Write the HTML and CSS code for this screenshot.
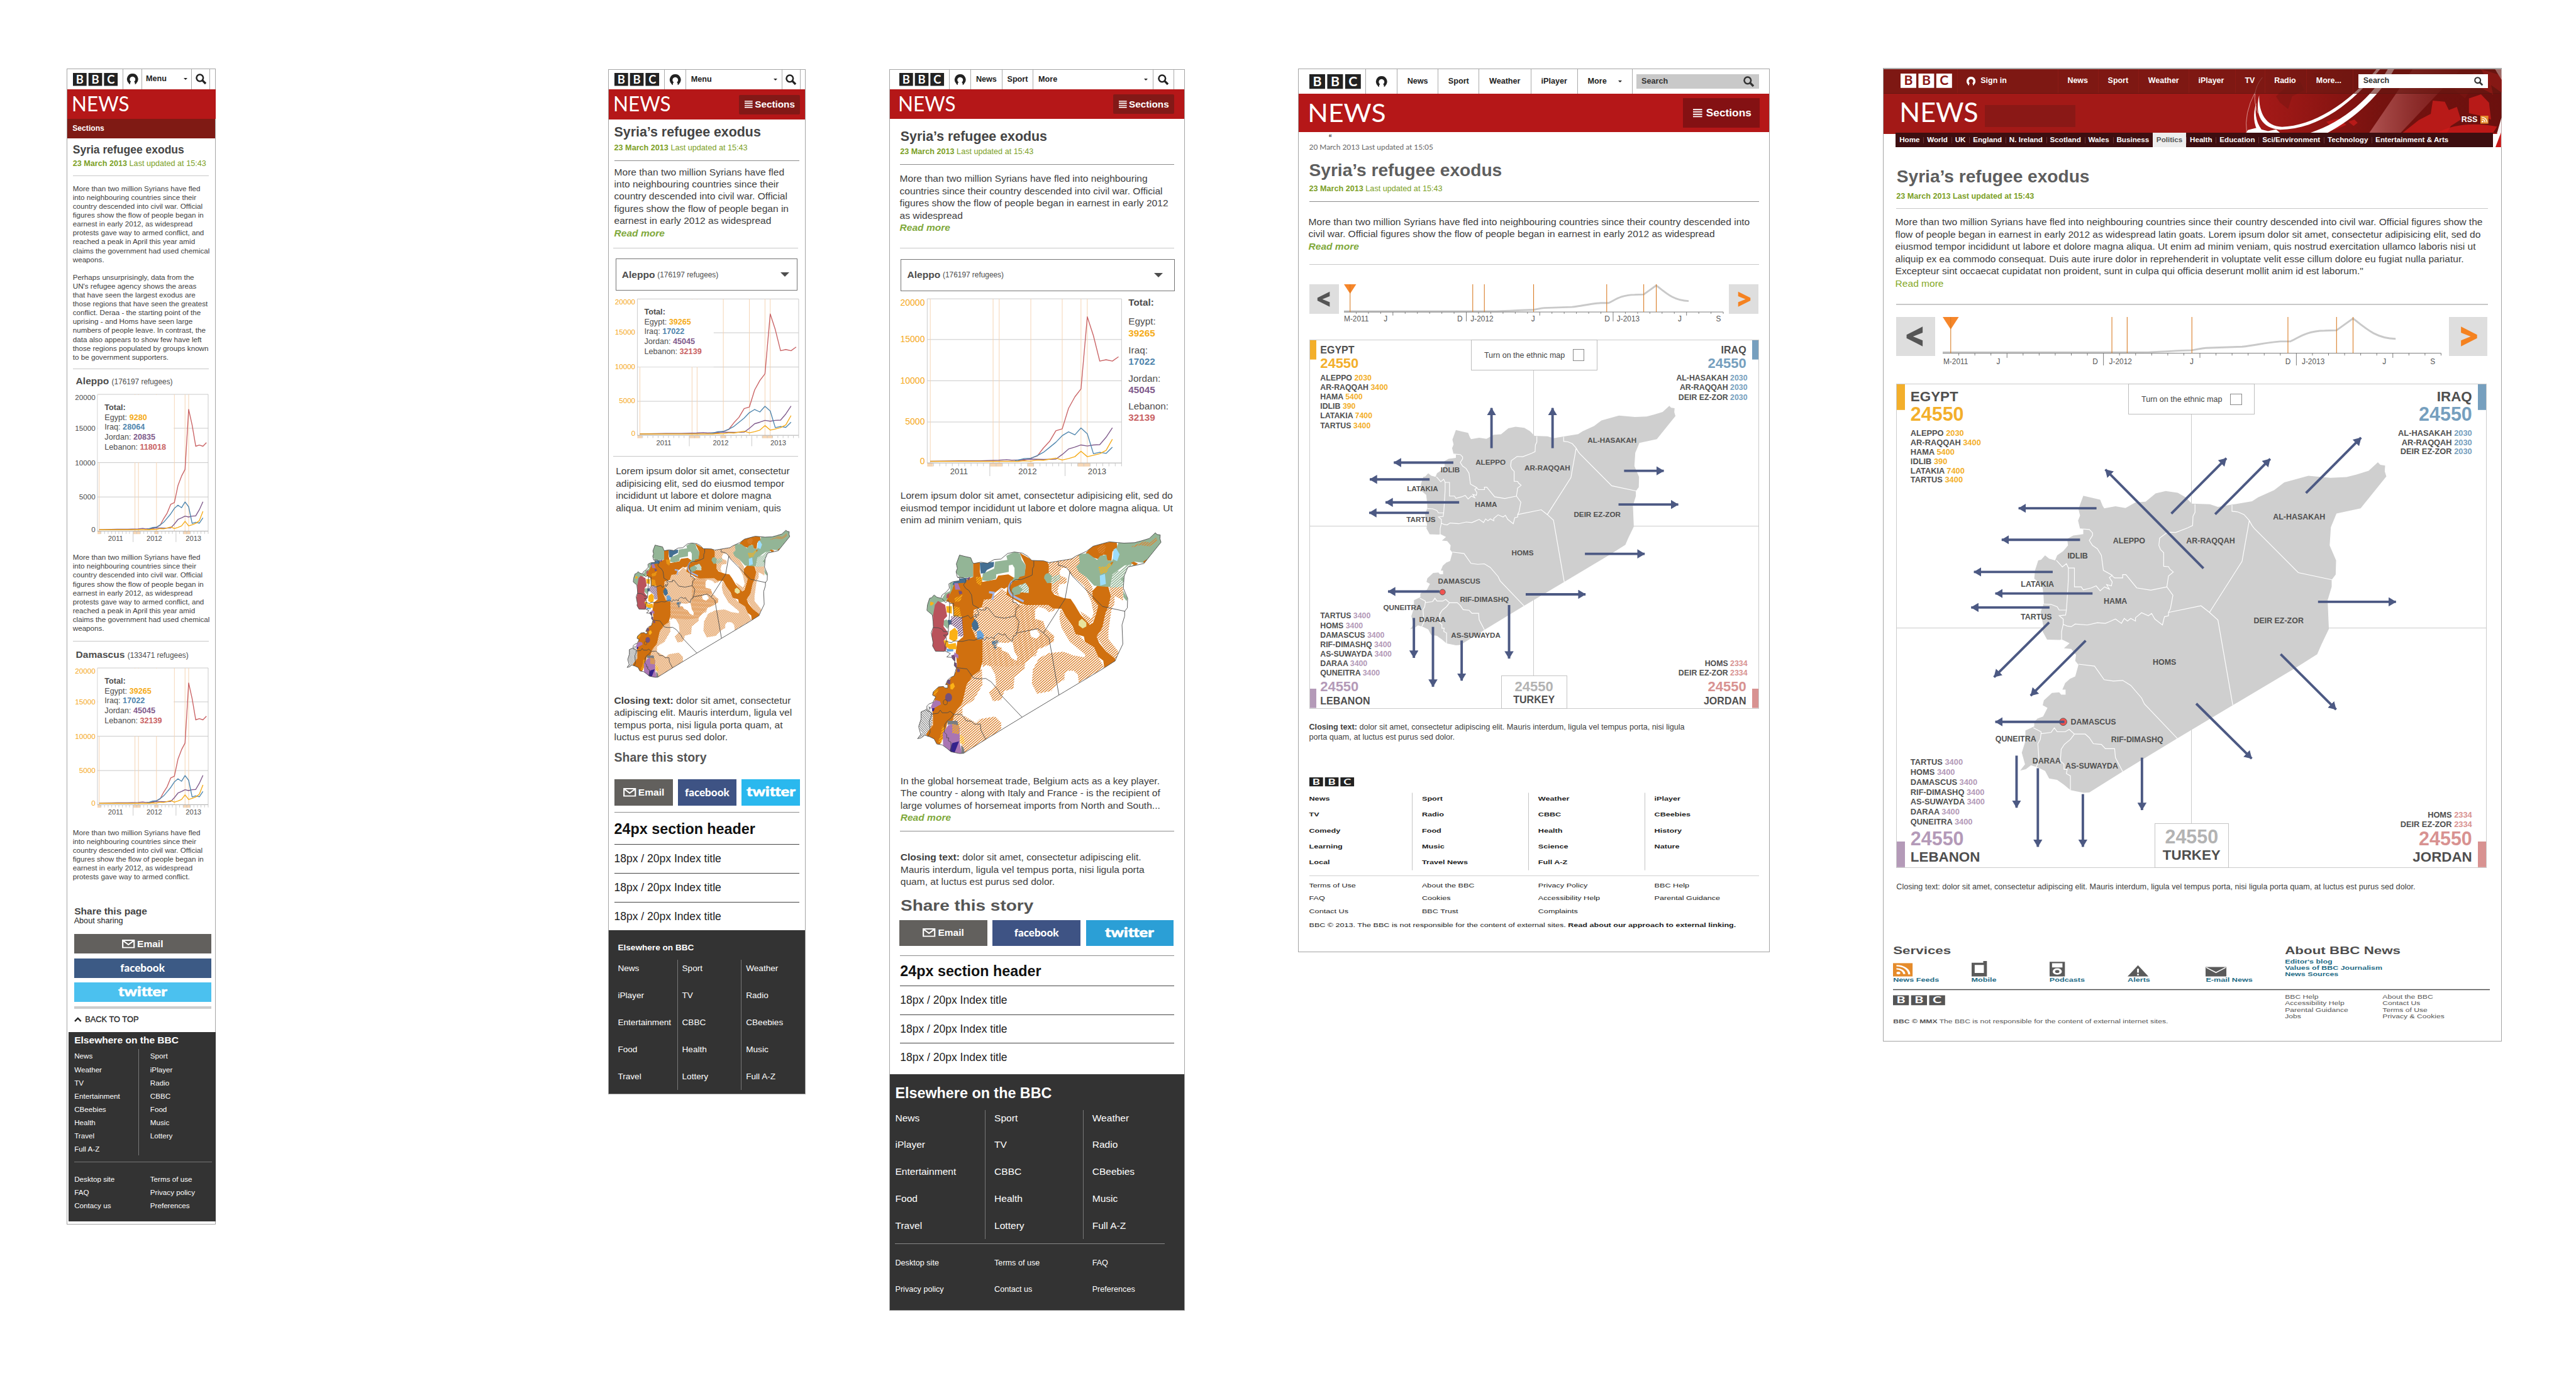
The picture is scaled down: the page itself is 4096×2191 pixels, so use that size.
FILE: index.html
```html
<!DOCTYPE html>
<html lang="en">
<head>
<meta charset="utf-8">
<title>Syria's refugee exodus - breakpoints</title>
<link rel="stylesheet" href="styles.css">
</head>
<body>
<svg class="defs" width="0" height="0">
  <defs>
    <symbol id="bbc" viewBox="0 0 73 21" preserveAspectRatio="none">
      <path class="bg" d="M0 0h22.3v21H0zM25.4 0h22.3v21H25.4zM50.8 0h22.3v21H50.8z"/>
      <g class="fg bbc-t"><text x="11.2" y="17">B</text><text x="36.6" y="17">B</text><text x="62" y="17">C</text></g>
    </symbol>
    <symbol id="news" viewBox="0 0 92 24" preserveAspectRatio="none">
      <text class="news-t" x="-2" y="23.6" textLength="94" lengthAdjust="spacingAndGlyphs">NEWS</text>
    </symbol>
    <symbol id="user" viewBox="0 0 18 18">
      <path fill="currentColor" fill-rule="evenodd" d="M9 0a9 9 0 0 1 6.6 15.200q-.4 1.800-2.600 2.600q.6-3-1.400-4.600a4.600 4.600 0 1 0-5.200 0q-2 1.600-1.400 4.600q-2.200-.8-2.600-2.600A9 9 0 0 1 9 0z"/>
    </symbol>
    <symbol id="search" viewBox="0 0 18 18">
      <circle cx="7" cy="7" r="5.500" fill="none" stroke="currentColor" stroke-width="2.600"/>
      <path d="M11 11l5.500 5.500" stroke="currentColor" stroke-width="3.400"/>
    </symbol>
    <symbol id="bars" viewBox="0 0 13 12">
      <path d="M0 1h13M0 4.300h13M0 7.700h13M0 11h13" stroke="currentColor" stroke-width="1.700"/>
    </symbol>
    <symbol id="mail" viewBox="0 0 21 16" preserveAspectRatio="none">
      <path d="M1.200 1.200h18.600v13.600H1.200zM1.200 1.500l9.300 7.800 9.300-7.800" fill="none" stroke="currentColor" stroke-width="2.200"/>
    </symbol>
    <symbol id="rss" viewBox="0 0 20 20" preserveAspectRatio="none">
      <path fill="#e58b2b" d="M0 0h20v20H0z"/><circle cx="5.500" cy="14.800" r="2" fill="#fff"/>
      <path d="M3.500 8.500a8 8 0 0 1 8 8M3.500 3.800a13 13 0 0 1 13 13" fill="none" stroke="#fff" stroke-width="2.200"/>
    </symbol>
    <symbol id="chev-l" viewBox="0 0 48 48"><path fill="#555" d="M33 12v7.500l-12 4.800 12 4.800v7.500L13 26.500v-4.400z"/></symbol>
    <symbol id="chev-r" viewBox="0 0 48 48"><path fill="#f58220" d="M15 12v7.500l12 4.800-12 4.800v7.500l20-10.100v-4.400z"/></symbol>

    <symbol id="axis" viewBox="210 870 953 601" preserveAspectRatio="none">
      <path class="grid" d="M210 870H1163V1471M210 870V1471M210 1019H1163M210 1170H1163M210 1321H1163"/>
    </symbol>
    <symbol id="events" viewBox="210 870 953 601" preserveAspectRatio="none">
      <path class="ev" d="M225 870V1471M533 870V1471M563 870V1471M718 870V1471M872 870V1471M964 870V1471M995 870V1471"/>
      <path fill="#f6d6b4" d="M210 1471h28v13h-28zM516 1471h62v13h-62zM703 1471h30v13h-30zM948 1471h60v13h-60z"/>
      <path class="grid dark" d="M210 1471H1163"/>
      <path class="grid" d="M241 1471v12M271 1471v12M302 1471v12M333 1471v12M364 1471v12M394 1471v12M425 1471v12M456 1471v12M486 1471v12M517 1471v48M548 1471v12M579 1471v12M609 1471v12M640 1471v12M671 1471v12M702 1471v12M732 1471v12M763 1471v12M794 1471v12M825 1471v12M855 1471v12M886 1471v48M917 1471v12M948 1471v12M978 1471v12M1009 1471v12M1040 1471v12M1071 1471v12M1101 1471v12M1132 1471v12M1163 1471v12"/>
    </symbol>
    <symbol id="series" viewBox="210 870 953 601" preserveAspectRatio="none">
      <polyline class="ln" stroke="#c96264" points="655,1463 685,1460 718,1454 750,1445 780,1416 810,1392 841,1353 872,1346 903,1271 934,1229 964,1200 995,936 1025,1005 1056,1098 1087,1093 1118,1098 1148,1082"/>
      <polyline class="ln" stroke="#7f5a8b" points="225,1465 380,1463 470,1463 560,1461 600,1459 625,1461 655,1460 718,1457 780,1458 841,1457 872,1440 903,1420 934,1413 964,1405 995,1409 1025,1405 1056,1404 1087,1377 1118,1342"/>
      <polyline class="ln" stroke="#4f86ae" points="640,1462 655,1461 685,1455 718,1454 750,1444 780,1432 810,1414 841,1395 872,1371 903,1357 934,1368 964,1343 995,1364 1025,1437 1056,1432 1087,1436 1118,1413"/>
      <polyline class="ln" stroke="#f5ab18" points="225,1465 655,1465 685,1463 718,1464 750,1460 780,1461 841,1453 872,1460 903,1455 934,1448 964,1428 995,1448 1025,1443 1056,1437 1087,1425 1118,1384"/>
    </symbol>

    <symbol id="flow" viewBox="0 0 1240 183" preserveAspectRatio="none">
      <path class="curve" d="M0 168L500 168C540 166 580 160 620 158C635 154 640 149 655 147L745 141C780 134 800 122 840 116L865 116C885 99 905 66 950 65L980 63L1021 7C1055 59 1080 102 1127 104"/>
      <path class="tick" d="M0 172H1240M40 172v11M80 172v11M120 172v11M160 172v22M200 172v11M240 172v11M280 172v11M320 172v11M360 172v11M400 172v58M440 172v11M480 172v11M520 172v11M560 172v11M600 172v11M640 172v22M680 172v11M720 172v11M760 172v11M800 172v11M840 172v11M880 172v58M920 172v11M960 172v11M1000 172v11M1040 172v11M1080 172v11M1120 172v22M1160 172v11M1200 172v11M1240 172v11"/>
      <path fill="#f6862a" d="M0 0h40L20 59z"/>
      <path class="mark" d="M20 0V172M421 0V172M459 0V172M620 0V172M859 0V172M980 0V172M1021 0V172"/>
    </symbol>

    <marker id="tip" markerUnits="userSpaceOnUse" markerWidth="13" markerHeight="15" refX="12" refY="7.500" orient="auto"><path fill="#4c5983" d="M0 0L12.500 7.500L0 15z"/></marker>

    <path id="land" d="M1243 249L1249 257 1261 259 1260 276 1264 292 1200 388 1140 404 1126 445 1123 500 1139 545 1138 588 1128 604 1128 625 1118 665 1121 752 1102 800 1092 828 1040 868 882 982 744 1082 608 1182 525 1245 510 1246 478 1238 462 1222 445 1207 425 1203 415 1180 398 1170 380 1163 367 1175 353 1179 365 1160 357 1125 366 1090 366 1058 388 1046 388 1032 396 1022 410 1016 421 990 409 982 412 967 432 945 450 943 455 950 466 950 466 935 458 935 465 915 477 902 490 895 498 860 490 848 492 830 480 812 462 810 476 795 456 783 452 785 420 784 409 760 411 745 404 700 412 675 411 650 408 620 388 600 390 575 398 545 405 543 415 530 425 540 440 545 445 530 460 517 472 500 470 480 485 470 510 466 510 452 502 450 497 425 502 410 498 390 510 350 530 356 552 362 558 380 562 388 590 382 615 387 640 370 665 368 690 343 715 336 745 341 765 355 780 374 825 376 845 384 880 377 930 367 945 355 985 333 1010 310 1070 290 1125 296 1165 294 1190 286 1220 275Z"/>
    <path id="borders" d="M788 376L788 400 783 412 782 440 770 447 740 461 720 460 700 478 698 500 702 512 710 522 710 563 722 564 726 572 734 580 722 592 718 625M502 450L525 452 533 462 533 470 525 485 533 500 545 510 555 530 560 575 582 590 575 597 582 610 580 622 568 618 575 632 563 625 552 637 542 622 530 628 510 634 505 625 488 625 488 568 473 568 468 555 458 565 443 545M582 592L588 598 608 598 608 588 616 588 643 628 678 635 718 625 733 650 727 690 722 702 722 712 712 715 707 740 688 722 680 705 672 712 655 703 640 718 640 728 628 720 620 728 612 720 605 735 590 722 575 730 565 735 545 733 520 740 490 737 480 745 470 743 460 738 456 760 456 783M473 568L473 600 470 660 468 695 450 695 445 685 430 678 412 677M468 695L466 710 450 712 460 722 460 738M722 702L803 682 824 702 845 725 882 982M824 702L905 548 923 425M880 378L880 397 895 399 910 407 923 425 930 440 935 448 1045 582 1130 604M498 858L538 864 562 905 585 909 608 907 628 922 655 960 662 978 744 1082M386 1050L405 1062 405 1068 430 1064 438 1050 445 1062 465 1062 475 1055 488 1069 515 1069 525 1080 535 1098 555 1100 565 1113 588 1113 590 1140 608 1182M405 1066L403 1085 397 1098 400 1150 392 1170M488 1069L478 1085 463 1100 455 1115 453 1150 462 1160 462 1175 470 1175 468 1188 478 1195 478 1238"/>
    <symbol id="syria" viewBox="0 0 965 791" overflow="visible">
      <g transform="translate(-30.220 -7.590) scale(.65703 .54201)">
        <use href="#land" fill="#cfcfcf"/><use href="#borders" class="edge"/>
      </g>
    </symbol>

    <pattern id="hOr" width="8" height="8" patternUnits="userSpaceOnUse" patternTransform="rotate(-35)"><rect width="8" height="4" fill="#dc8635"/></pattern>
    <pattern id="hGr" width="8" height="8" patternUnits="userSpaceOnUse" patternTransform="rotate(-35)"><rect width="8" height="4.400" fill="#93b596"/></pattern>
    <pattern id="hYe" width="8" height="8" patternUnits="userSpaceOnUse" patternTransform="rotate(-35)"><rect width="8" height="4.400" fill="#fbb116"/></pattern>
    <pattern id="hPu" width="8" height="8" patternUnits="userSpaceOnUse" patternTransform="rotate(-35)"><rect width="8" height="4.400" fill="#74507a"/></pattern>
    <pattern id="hBk" width="7" height="7" patternUnits="userSpaceOnUse" patternTransform="rotate(40)"><rect width="7" height="2.600" fill="#666"/></pattern>
    <clipPath id="inside"><use href="#land" transform="matrix(1.3095 0 0 .8726 -297.300 -46.300)"/></clipPath>
    <symbol id="ethnic" viewBox="165 171 1193 870" preserveAspectRatio="none">
      <g clip-path="url(#inside)">
        <g fill="url(#hOr)">
          <path d="M480 470L490 435 530 430 575 390 600 405 625 425 640 445 665 460 700 450 810 452 840 475 810 485 790 470 755 463 740 480 740 510 780 520 790 545 760 550 750 555 760 575 740 588 720 580 712 560 790 570 835 575 832 600 790 620 755 630 745 655 715 665 690 690 690 708 640 740 635 785 590 795 575 830 535 835 515 800 550 770 545 730 525 700 500 692 485 705 478 600 450 585 430 545 435 500 440 475Z"/>
          <path d="M640 450L740 460 740 510 780 520 790 545 830 575 832 600 755 630 690 690 600 700 480 690 478 600 640 600Z"/>
          <path d="M865 470L890 500 925 545 985 600 1030 620 1050 660 1080 702 955 762 950 730 930 715 900 715 885 730 885 750 850 765 820 795 750 805 725 765 730 710 760 665 810 645 880 640 930 655 985 662 985 650 910 600 870 545 860 510Z"/>
          <path d="M805 285L965 255 960 290 945 300 960 325 990 345 1022 385 1025 430 1050 455 1040 490 1010 545 960 480 990 495 1015 510 1028 490 1015 440 980 380 910 330 900 310 870 310 860 330 865 340 895 350 895 370 860 375 850 400 860 420 825 405 822 370 808 335Z"/>
          <path d="M1105 385L1172 385 1172 440 1155 430 1130 420 1130 450 1115 475 1105 530 1100 560 1100 590 1150 640 1135 680 1090 640 1040 580 1085 490 1112 420Z"/>
          <path d="M430 738L480 705 483 770 440 830 385 860 385 890 345 895 345 880 385 840 405 770Z"/>
          <path d="M330 905L345 890 395 893 450 920 470 905 545 895 575 920 575 955 397 1042 380 1005 370 930Z"/>
          <path d="M205 965L240 900 235 955Z"/>
        </g>
        <path fill="#fff" d="M555 602L600 605 630 600 640 640 655 660 650 675 625 665 610 645 580 635 575 622 555 620ZM715 560L745 550 765 572 745 588 720 580ZM485 700l18-8 22 8 5 35-20 10-28-5z"/>
        <path fill="#d0700f" d="M437 288L470 286 470 325 482 365 550 355 560 340 610 335 640 350 690 330 695 300 665 250 722 276 800 283 808 300 808 335 790 345 800 365 822 370 822 400 835 415 880 428 915 432 935 455 952 478 962 492 1010 535 1025 525 1040 490 1050 458 1022 430 1022 400 1050 376 1100 385 1112 420 1100 460 1085 490 1070 545 1042 580 1055 605 1090 640 1130 665 1140 680 1080 705 1075 675 1050 660 1030 622 985 600 980 580 940 570 925 540 890 500 870 470 830 470 805 455 700 456 670 450 600 415 605 385 590 392 575 388 540 410 525 432 490 435 480 465 440 475 437 500 450 520 430 545 450 585 483 590 483 680 470 715 435 735 405 770 385 840 348 880 335 915 310 920 300 960 275 1005 240 1000 205 965 240 930 240 895 235 850 250 830 235 800 258 775 300 770 352 720 358 690 352 640 360 600 390 580 380 500 345 500 335 450 305 440 330 400 345 370 395 360 437 345Z"/>
        <path fill="#d0700f" d="M990 250L1030 215 1140 205 1145 235 1120 245 1115 282 1095 280 1085 258 1075 258 1050 275 1000 262Z"/>
        <g fill="#93b596">
          <path d="M360 255L400 262 437 268 437 345 400 348 375 350 345 320 350 285Z"/>
          <path d="M480 358L485 332 540 312 545 285 605 278 600 262 645 244 668 255 675 278 695 300 690 340 665 345 655 358 625 362 640 345 640 310 630 297 612 300 612 325 580 330 550 335 550 352 510 362Z"/>
          <path d="M955 255L1000 252 1022 265 1045 278 1060 262 1090 258 1095 280 1118 282 1150 208 1370 160 1370 213 1275 290 1225 285 1210 297 1180 300 1120 335 1110 385 1070 383 1030 380 990 345 955 325 942 305 960 290Z"/>
          <path d="M785 350q0-18 20-20l18 10-3 28-20 2z"/>
          <path d="M630 390q20-10 40-10l10 15-15 18-30 5-10-15z"/>
          <path d="M215 435L240 415 285 430 300 410 325 400 322 365 345 368 335 395 305 440 260 450 245 500 210 500Z"/>
          <path d="M262 463l15-8 10 12-8 15-15-2zM292 518l15-6 15 18-10 20-20-15zM1172 400l22 30-5 10-15-15zM1160 355l15-10v20z"/>
        </g>
        <path fill="url(#hGr)" d="M1120 325L1160 320 1190 295 1240 298 1185 330 1170 385 1112 388ZM820 345l40-10 5 20-40 18z"/>
        <path fill="#fff" d="M660 380l35-10 15 18 0 20-40-2 10-12z"/>
        <path fill="url(#hGr)" d="M650 380l45-12 15 20 0 20-40-2z"/>
        <path fill="url(#hOr)" d="M1215 225l60-20 30 5 30-20 5 15-40 20-45-5-40 10zM1045 235l25-20 18 10-10 30-25-5z"/>
        <path fill="#d0700f" d="M1210 290l15-5 20 8-15 8zM1110 290l15-5-10 15zM1270 285l20-10-10 20z"/>
        <path fill="url(#hYe)" d="M1050 305l40 0 10-12 20-2-15 15-15 22-30 5z"/>
        <path fill="#9cdcfb" d="M1125 238l12-7 18 25-12 27-22-8zM1058 340l25-7 5 40-28 7z"/>
        <path fill="#446f93" d="M470 290L540 286 538 305 505 318 495 330 475 332 472 315ZM430 530l15-20 15 15 5 20-15 15-15-10zM370 352l38-4-6 20-35 2-30 8 2-12zM312 515l20 0 0 15-15 5z"/>
        <path fill="#67a3dc" d="M455 560l18-5 17 18-3 17-30 2zM305 628l35 0 0 10-30 2z"/>
        <path fill="none" stroke="#446f93" stroke-width="14" stroke-dasharray="4 3" d="M538 600q10 20 5 28M530 605l30-5"/>
        <path fill="#b9535c" d="M250 455L265 440 300 455 310 500 295 512 292 540 310 560 315 570 295 595 310 620 300 642 248 645 228 590 240 550 240 500ZM308 415l15-8-5 20-12 3z"/>
        <g fill="#fbb116"><path d="M305 460l28 0 0 30-25-5zM228 442l18 5-10 10-10 0zM322 560l25-15 15 15-2 30-15 10-25-10zM292 595l20 0 5 15 35-5 5 25-35 0-20-12zM325 770l15-8 8 15-12 12-10-2z"/></g>
        <path fill="url(#hYe)" d="M345 430l40-15-10 25-25 5zM450 345l35 0-10 35-20-10zM340 460l30 5 10 40-40 0zM245 790l25-5-15 25-12 5zM285 935l20 5 0 25-25 35-15-5 15-30z"/>
        <path fill="url(#hPu)" d="M330 500l55 5 5 75-25 0-5-30-35-20z"/><circle cx="317" cy="820" r="17" fill="#74507a"/><circle cx="301" cy="839" r="10" fill="none" stroke="#444" stroke-width="2"/>
        <path fill="#74507a" d="M330 655l20-5 0 28-15-8zM345 680l12 5 0 18-12-5zM358 705l15 5-2 10-12 0zM312 750l14 0-2 20-16-6zM365 400l15 0 5 10-15 5zM405 350l20-5-10 15z"/>
        <path fill="#a975b3" d="M290 1008L288 960 315 930 360 918 372 940 372 1000 382 1042 325 1038ZM240 840l15-10 20 5 5 12-45 20-5-10zM345 370l18 0 12 25-25 0zM345 642l20 10 0 15-20-10z"/>
        <path fill="url(#hYe)" d="M335 925l35-5 0 45-35-5zM372 965l20 10 5 30-25-5z"/>
        <path fill="#35238c" d="M335 1000L368 993 355 1020 345 1040 322 1030ZM237 862l12 0-5 12-8 0z"/>
        <path fill="#7a7d80" d="M312 912L360 912 365 930 340 925 312 928ZM378 1008l12 10 8 25-18 0zM218 855l12 5-5 10z"/>
        <path fill="#fff" d="M175 880L218 862 238 880 233 930 205 968 160 985 185 960 168 930Z"/>
        <path fill="url(#hBk)" d="M175 880L218 862 240 880 235 930 205 968 160 985 185 960 168 930Z"/>
        <path fill="#e8e39d" d="M955 520l15-10 22 15 0 15-18 8-20-12z"/>
        <path fill="none" stroke="#a5b5e0" stroke-width="9" d="M628 362Q595 395 630 420L685 442M515 405L538 408 532 435"/>
      </g>
      <g class="ink" transform="matrix(1.3095 0 0 .8726 -297.300 -46.300)"><use href="#land"/><use href="#borders"/></g>
    </symbol>
  </defs>
</svg>

<main class="board">

<article class="panel xs">
  <header class="bar">
    <svg class="logo"><use href="#bbc"/></svg>
    <span class="cell user"><svg><use href="#user"/></svg></span>
    <span class="cell menu">Menu<i class="caret"></i></span>
    <span class="cell find"><svg><use href="#search"/></svg></span>
    <span class="cell"></span>
  </header>
  <div class="mast"><svg class="newslogo"><use href="#news"/></svg></div>
  <div class="sectionbar">Sections</div>
  <h1>Syria refugee exodus</h1>
  <p class="date"><b>23 March 2013</b> Last updated at 15:43</p>
  <hr>
  <p class="copy">More than two million Syrians have fled<br>into neighbouring countries since their<br>country descended into civil war. Official<br>figures show the flow of people began in<br>earnest in early 2012, as widespread<br>protests gave way to armed conflict, and<br>reached a peak in April this year amid<br>claims the government had used chemical<br>weapons.<br><br>Perhaps unsurprisingly, data from the<br>UN's refugee agency shows the areas<br>that have seen the largest exodus are<br>those regions that have seen the greatest<br>conflict. Deraa - the starting point of the<br>uprising - and Homs have seen large<br>numbers of people leave. In contrast, the<br>data also appears to show few have left<br>those regions populated by groups known<br>to be government supporters.</p>
  <hr>
  <h2 class="place">Aleppo <small>(176197 refugees)</small></h2>
  <svg class="chart grey" width="242" height="262">
    <use href="#axis" x="49.300" y="9.300" width="181" height="223.500"/>
    <use href="#events" x="49.300" y="9.300" width="181" height="223.500"/>
    <rect x="50" y="10.300" width="124" height="110" fill="#fff"/>
    <use href="#series" x="49.300" y="9.300" width="181" height="223.500"/>
    <g class="y"><text x="46" y="19">20000</text><text x="46" y="69">15000</text><text x="46" y="125.600">10000</text><text x="46" y="181.400">5000</text><text x="46" y="234.200">0</text></g>
    <g class="x"><text x="79" y="248.700">2011</text><text x="142.300" y="248.700">2012</text><text x="206.300" y="248.700">2013</text></g>
    <g class="key"><text x="61" y="35" class="b">Total:</text><text x="61" y="51">Egypt: <tspan class="eg">9280</tspan></text><text x="61" y="67">Iraq: <tspan class="iq">28064</tspan></text><text x="61" y="83">Jordan: <tspan class="jo">20835</tspan></text><text x="61" y="99.400">Lebanon: <tspan class="le">118018</tspan></text></g>
  </svg>
  <p class="copy">More than two million Syrians have fled<br>into neighbouring countries since their<br>country descended into civil war. Official<br>figures show the flow of people began in<br>earnest in early 2012, as widespread<br>protests gave way to armed conflict, and<br>reached a peak in April this year amid<br>claims the government had used chemical<br>weapons.</p>
  <hr>
  <h2 class="place">Damascus <small>(133471 refugees)</small></h2>
  <svg class="chart" width="242" height="262">
    <use href="#axis" x="49.300" y="9.300" width="181" height="223.500"/>
    <use href="#events" x="49.300" y="9.300" width="181" height="223.500"/>
    <rect x="50" y="10.300" width="124" height="110" fill="#fff"/>
    <use href="#series" x="49.300" y="9.300" width="181" height="223.500"/>
    <g class="y"><text x="46" y="19">20000</text><text x="46" y="69">15000</text><text x="46" y="125.600">10000</text><text x="46" y="181.400">5000</text><text x="46" y="234.200">0</text></g>
    <g class="x"><text x="79" y="248.700">2011</text><text x="142.300" y="248.700">2012</text><text x="206.300" y="248.700">2013</text></g>
    <g class="key"><text x="61" y="35" class="b">Total:</text><text x="61" y="51">Egypt: <tspan class="eg">39265</tspan></text><text x="61" y="67">Iraq: <tspan class="iq">17022</tspan></text><text x="61" y="83">Jordan: <tspan class="jo">45045</tspan></text><text x="61" y="99.400">Lebanon: <tspan class="le">32139</tspan></text></g>
  </svg>
  <p class="copy">More than two million Syrians have fled<br>into neighbouring countries since their<br>country descended into civil war. Official<br>figures show the flow of people began in<br>earnest in early 2012, as widespread<br>protests gave way to armed conflict.</p>
  <h2 class="sharepage">Share this page</h2>
  <p class="about">About sharing</p>
  <div class="share">
    <a class="em"><svg><use href="#mail"/></svg>Email</a>
    <a class="fb">facebook</a>
    <a class="tw"><svg width="82" height="24"><text x="1" y="19" textLength="80" lengthAdjust="spacingAndGlyphs">twitter</text></svg></a>
  </div>
  <div class="thick"></div>
  <p class="top"><svg width="12" height="8"><path d="M1 7L6 2l5 5" fill="none" stroke="#222" stroke-width="2.400"/></svg>BACK TO TOP</p>
  <footer class="dark">
    <h3>Elsewhere on the BBC</h3>
    <div class="links"><ul><li>News<li>Weather<li>TV<li>Entertainment<li>CBeebies<li>Health<li>Travel<li>Full A-Z</ul><ul><li>Sport<li>iPlayer<li>Radio<li>CBBC<li>Food<li>Music<li>Lottery</ul></div>
    <div class="links legal"><ul><li>Desktop site<li>FAQ<li>Contacy us</ul><ul><li>Terms of use<li>Privacy policy<li>Preferences</ul></div>
  </footer>
</article>

<article class="panel sm">
  <header class="bar">
    <svg class="logo"><use href="#bbc"/></svg>
    <span class="cell user"><svg><use href="#user"/></svg></span>
    <span class="cell menu">Menu<i class="caret"></i></span>
    <span class="cell find"><svg><use href="#search"/></svg></span>
    <span class="cell"></span>
  </header>
  <div class="mast"><svg class="newslogo"><use href="#news"/></svg><a class="sections"><svg><use href="#bars"/></svg>Sections</a></div>
  <h1>Syria’s refugee exodus</h1>
  <p class="date"><b>23 March 2013</b> Last updated at 15:43</p>
  <hr class="mid">
  <p class="copy">More than two million Syrians have fled<br>into neighbouring countries since their<br>country descended into civil war. Official<br>figures show the flow of people began in<br>earnest in early 2012 as widespread<br><a class="more">Read more</a></p>
  <hr class="wide">
  <div class="select"><b>Aleppo</b> <small>(176197 refugees)</small><i></i></div>
  <svg class="chart" width="322" height="262">
    <use href="#axis" x="46.700" y="9.600" width="263.700" height="222.900"/>
    <use href="#events" x="46.700" y="9.600" width="263.700" height="222.900"/>
    <rect x="47.500" y="10.600" width="124" height="110" fill="#fff"/>
    <use href="#series" x="46.700" y="9.600" width="263.700" height="222.900"/>
    <g class="y"><text x="43.300" y="18.600">20000</text><text x="43.300" y="68.300">15000</text><text x="43.300" y="124.300">10000</text><text x="43.300" y="180.200">5000</text><text x="43.300" y="233.700">0</text></g>
    <g class="x"><text x="90" y="248.800">2011</text><text x="183" y="248.800">2012</text><text x="277" y="248.800">2013</text></g>
    <g class="key"><text x="58" y="35.300" class="b">Total:</text><text x="58" y="51.300">Egypt: <tspan class="eg">39265</tspan></text><text x="58" y="67.300">Iraq: <tspan class="iq">17022</tspan></text><text x="58" y="83.300">Jordan: <tspan class="jo">45045</tspan></text><text x="58" y="99.300">Lebanon: <tspan class="le">32139</tspan></text></g>
  </svg>
  <hr class="wide">
  <p class="copy in">Lorem ipsum dolor sit amet, consectetur<br>adipisicing elit, sed do eiusmod tempor<br>incididunt ut labore et dolore magna<br>aliqua. Ut enim ad minim veniam, quis</p>
  <svg class="map"><use href="#ethnic"/></svg>
  <p class="copy"><b>Closing text:</b> dolor sit amet, consectetur<br>adipiscing elit. Mauris interdum, ligula vel<br>tempus porta, nisi ligula porta quam, at<br>luctus est purus sed dolor.</p>
  <h2 class="story">Share this story</h2>
  <div class="share">
    <a class="em"><svg><use href="#mail"/></svg>Email</a>
    <a class="fb">facebook</a>
    <a class="tw"><svg width="82" height="24"><text x="1" y="19" textLength="80" lengthAdjust="spacingAndGlyphs">twitter</text></svg></a>
  </div>
  <hr class="mid">
  <h2 class="sechead">24px section header</h2>
  <ul class="index"><li>18px / 20px Index title<li>18px / 20px Index title<li>18px / 20px Index title</ul>
  <footer class="dark">
    <h3>Elsewhere on BBC</h3>
    <div class="links"><ul><li>News<li>iPlayer<li>Entertainment<li>Food<li>Travel</ul><ul><li>Sport<li>TV<li>CBBC<li>Health<li>Lottery</ul><ul><li>Weather<li>Radio<li>CBeebies<li>Music<li>Full A-Z</ul></div>
  </footer>
</article>

<article class="panel md">
  <header class="bar">
    <svg class="logo"><use href="#bbc"/></svg>
    <span class="cell user"><svg><use href="#user"/></svg></span>
    <span class="cell item">News</span>
    <span class="cell item">Sport</span>
    <span class="cell menu">More<i class="caret"></i></span>
    <span class="cell find"><svg><use href="#search"/></svg></span>
    <span class="cell"></span>
  </header>
  <div class="mast"><svg class="newslogo"><use href="#news"/></svg><a class="sections"><svg><use href="#bars"/></svg>Sections</a></div>
  <h1>Syria’s refugee exodus</h1>
  <p class="date"><b>23 March 2013</b> Last updated at 15:43</p>
  <hr class="mid">
  <p class="copy">More than two million Syrians have fled into neighbouring<br>countries since their country descended into civil war. Official<br>figures show the flow of people began in earnest in early 2012<br>as widespread<br><a class="more">Read more</a></p>
  <hr>
  <div class="select"><b>Aleppo</b> <small>(176197 refugees)</small><i></i></div>
  <svg class="chart big" width="482" height="310">
    <use href="#axis" x="61" y="9.400" width="317.700" height="268.300"/>
    <use href="#events" x="61" y="9.400" width="317.700" height="268.300"/>
    <use href="#series" x="61" y="9.400" width="317.700" height="268.300"/>
    <g class="y"><text x="57" y="20.600">20000</text><text x="57" y="80">15000</text><text x="57" y="147.800">10000</text><text x="57" y="215.200">5000</text><text x="57" y="279.500">0</text></g>
    <g class="x"><text x="113" y="296.500">2011</text><text x="225" y="296.500">2012</text><text x="338.700" y="296.500">2013</text></g>
    <g class="key"><text x="390" y="21" class="b">Total:</text><text x="390" y="51">Egypt:</text><text x="390" y="70.600" class="eg">39265</text><text x="390" y="98.700">Iraq:</text><text x="390" y="117" class="iq">17022</text><text x="390" y="145">Jordan:</text><text x="390" y="163" class="jo">45045</text><text x="390" y="190.600">Lebanon:</text><text x="390" y="208.500" class="le">32139</text></g>
  </svg>
  <p class="copy in">Lorem ipsum dolor sit amet, consectetur adipisicing elit, sed do<br>eiusmod tempor incididunt ut labore et dolore magna aliqua. Ut<br>enim ad minim veniam, quis</p>
  <svg class="map"><use href="#ethnic"/></svg>
  <p class="copy in">In the global horsemeat trade, Belgium acts as a key player.<br>The country - along with Italy and France - is the recipient of<br>large volumes of horsemeat imports from North and South...<br><a class="more">Read more</a></p>
  <hr class="mid">
  <p class="copy in"><b>Closing text:</b> dolor sit amet, consectetur adipiscing elit.<br>Mauris interdum, ligula vel tempus porta, nisi ligula porta<br>quam, at luctus est purus sed dolor.</p>
  <h2 class="story">Share this story</h2>
  <div class="share">
    <a class="em"><svg><use href="#mail"/></svg>Email</a>
    <a class="fb">facebook</a>
    <a class="tw"><svg width="82" height="24"><text x="1" y="19" textLength="80" lengthAdjust="spacingAndGlyphs">twitter</text></svg></a>
  </div>
  <hr class="mid">
  <h2 class="sechead">24px section header</h2>
  <ul class="index"><li>18px / 20px Index title<li>18px / 20px Index title<li>18px / 20px Index title</ul>
  <footer class="dark">
    <h3>Elsewhere on the BBC</h3>
    <div class="links"><ul><li>News<li>iPlayer<li>Entertainment<li>Food<li>Travel</ul><ul><li>Sport<li>TV<li>CBBC<li>Health<li>Lottery</ul><ul><li>Weather<li>Radio<li>CBeebies<li>Music<li>Full A-Z</ul></div>
    <div class="links legal"><ul><li>Desktop site<li>Privacy policy</ul><ul><li>Terms of use<li>Contact us</ul><ul><li>FAQ<li>Preferences</ul></div>
  </footer>
</article>

<article class="panel lg">
  <header class="bar">
    <svg class="logo"><use href="#bbc"/></svg>
    <span class="cell user"><svg><use href="#user"/></svg></span>
    <span class="cell item">News</span><span class="cell item">Sport</span><span class="cell item">Weather</span><span class="cell item">iPlayer</span>
    <span class="cell item">More<i class="caret"></i></span>
    <span class="cell box"><span class="searchbox">Search<svg><use href="#search"/></svg></span></span>
  </header>
  <div class="mast"><svg class="newslogo"><use href="#news"/></svg><a class="sections"><svg><use href="#bars"/></svg>Sections</a></div>
  <p class="quote">“</p>
  <p class="olddate">20 March 2013 Last updated at 15:05</p>
  <h1>Syria’s refugee exodus</h1>
  <p class="date"><b>23 March 2013</b> Last updated at 15:43</p>
  <hr class="mid">
  <p class="copy">More than two million Syrians have fled into neighbouring countries since their country descended into<br>civil war. Official figures show the flow of people began in earnest in early 2012 as widespread<br><a class="more">Read more</a></p>
  <hr>
  <div class="timeline">
    <a><svg><use href="#chev-l"/></svg></a>
    <svg class="tl" width="620" height="64">
      <use href="#flow" width="620" height="48.200"/>
      <text x="0" y="61">M-2011</text><text x="65" y="61">J</text><text x="185" y="61">D</text><text x="207" y="61">J-2012</text><text x="306" y="61">J</text><text x="426" y="61">D</text><text x="446" y="61">J-2013</text><text x="546" y="61">J</text><text x="608" y="61">S</text>
    </svg>
    <a><svg><use href="#chev-r"/></svg></a>
  </div>
  <section class="atlas">
    <svg class="scene" width="735" height="603">
      <use href="#syria" width="965" height="791" transform="translate(17.600 14.800) scale(.7245)"/>
      <circle cx="216.600" cy="411.700" r="4.600" fill="#f05350" stroke="#555"/>
      <g class="arrows"><path d="M234.300 200H137"/><path d="M195.500 227.500H97.700"/><path d="M243.800 265H123.400"/><path d="M194.500 282.100H96.700"/><path d="M296.700 176.400V110.700"/><path d="M396.500 176.400V110.700"/><path d="M513.400 213.500H578.300"/><path d="M504.300 268.500H602"/><path d="M449.400 349.200H547.100"/><path d="M352.600 415.300H450.400"/><path d="M211.600 410.700H127.500"/><path d="M169.800 453.900V519.200"/><path d="M201 468.500V566.400"/><path d="M247.900 490.700V556.400"/><path d="M325.400 432.800V520.300"/></g>
      <g class="names"><text x="295.200" y="203.500">ALEPPO</text><text x="387.900" y="212.500">AR-RAQQAH</text><text x="493.700" y="167.500">AL-HASAKAH</text><text x="229.200" y="215.700">IDLIB</text><text x="183.900" y="246.700">LATAKIA</text><text x="287.700" y="272.500">HAMA</text><text x="181.400" y="297.500">TARTUS</text><text x="469.500" y="288.500">DEIR EZ-ZOR</text><text x="347.600" y="351.700">HOMS</text><text x="243.800" y="397.500">DAMASCUS</text><text x="285.100" y="427.500">RIF-DIMASHQ</text><text x="151.100" y="440.700">QUNEITRA</text><text x="200" y="460.700">DARAA</text><text x="271" y="486.700">AS-SUWAYDA</text></g>
    </svg>
    <div class="q egypt"><h4>EGYPT</h4><strong>24550</strong><ul><li>ALEPPO <em>2030</em><li>AR-RAQQAH <em>3400</em><li>HAMA <em>5400</em><li>IDLIB <em>390</em><li>LATAKIA <em>7400</em><li>TARTUS <em>3400</em></ul></div>
    <div class="q iraq"><h4>IRAQ</h4><strong>24550</strong><ul><li>AL-HASAKAH <em>2030</em><li>AR-RAQQAH <em>2030</em><li>DEIR EZ-ZOR <em>2030</em></ul></div>
    <div class="q lebanon"><ul><li>TARTUS <em>3400</em><li>HOMS <em>3400</em><li>DAMASCUS <em>3400</em><li>RIF-DIMASHQ <em>3400</em><li>AS-SUWAYDA <em>3400</em><li>DARAA <em>3400</em><li>QUNEITRA <em>3400</em></ul><strong>24550</strong><h4>LEBANON</h4></div>
    <div class="q jordan"><ul><li>HOMS <em>2334</em><li>DEIR EZ-ZOR <em>2334</em></ul><strong>24550</strong><h4>JORDAN</h4></div>
    <label class="toggle">Turn on the ethnic map<i></i></label>
    <div class="turkey"><strong>24550</strong><h4>TURKEY</h4></div>
  </section>
  <p class="closing"><b>Closing text:</b> dolor sit amet, consectetur adipiscing elit. Mauris interdum, ligula vel tempus porta, nisi ligula<br>porta quam, at luctus est purus sed dolor.</p>
  <footer class="light">
    <svg class="logo"><use href="#bbc"/></svg>
    <div class="cols"><ul><li>News<li>TV<li>Comedy<li>Learning<li>Local</ul><ul><li>Sport<li>Radio<li>Food<li>Music<li>Travel News</ul><ul><li>Weather<li>CBBC<li>Health<li>Science<li>Full A-Z</ul><ul><li>iPlayer<li>CBeebies<li>History<li>Nature</ul></div>
    <div class="cols legal"><ul><li>Terms of Use<li>FAQ<li>Contact Us</ul><ul><li>About the BBC<li>Cookies<li>BBC Trust</ul><ul><li>Privacy Policy<li>Accessibility Help<li>Complaints</ul><ul><li>BBC Help<li>Parental Guidance</ul></div>
    <p>BBC © 2013. The BBC is not responsible for the content of external sites. <b>Read about our approach to external linking.</b></p>
  </footer>
</article>

<article class="panel xl">
  <div class="hero">
    <svg class="art" width="421" height="130" viewBox="0 0 421 130">
      <defs><linearGradient id="sh" x1="0" x2="1"><stop offset="0" stop-color="#7a120f" stop-opacity="0"/><stop offset=".5" stop-color="#75120f"/><stop offset="1" stop-color="#6b100e"/></linearGradient>
      <linearGradient id="band" x1="0" x2="1"><stop offset="0" stop-color="#d88" stop-opacity=".55"/><stop offset="1" stop-color="#a44" stop-opacity=".1"/></linearGradient></defs>
      <g transform="translate(-599 -12) scale(.657 .3444)">
        <path fill="url(#sh)" d="M960 41H1551V343H960z"/>
        <path fill="url(#band)" d="M1330 41H1450L1300 343H1222z"/>
        <path fill="#b81a18" d="M1380 190l30 5 10 40 20-15 10 60-25 30-10 33h-110l40-60 30-30zM1470 180l30-20 20 40 5 80-30-20-25-10zM1500 41l51 30v80l-30-40zM1115 290l30-15 20 30-30 25zM1170 290l15-10 8 15-10 15z"/>
        <path fill="#d01a1a" d="M1390 343q60-60 150-30l-10 30zM1480 60l40 10 10 90-30-30z" opacity=".8"/>
        <path fill="#7d1512" d="M990 170q30-60 60-70l10 40-30 30-10 60-20-30zM1080 60l40 0-20 40zM1450 60l30 60-20 60-25-40z" opacity=".6"/>
        <path fill="#fff" d="M1268 41H1284C1250 160 1190 270 1118 343H1075C1160 290 1230 170 1268 41z"/>
        <path fill="#fff" d="M1240 41H1249C1180 200 1100 325 1000 328C955 322 936 260 948 165C947 250 965 312 1005 315C1080 310 1170 210 1240 41z"/>
        <path fill="#fff" d="M941 200q-8 90 20 143h-14q-20-60-6-143zM920 330l20-10 30 15 20-8 10 16h-85z"/>
        <path fill="none" stroke="#e9b9b6" stroke-width="1.500" d="M938 150Q910 250 917 343M956 80Q925 150 945 250"/>
        <path fill="#fff" d="M1551 270V411H1540q2-60 0-70l-10 70zM1535 41h16v50z" opacity=".95"/>
        <path fill="#c81717" d="M1536 411l14-70v70z"/>
      </g>
    </svg>
    <div class="top">
      <svg class="logo"><use href="#bbc"/></svg>
      <span class="cell sign"><svg><use href="#user"/></svg>Sign in</span>
      <span class="cell">News</span><span class="cell">Sport</span><span class="cell">Weather</span><span class="cell">iPlayer</span><span class="cell">TV</span><span class="cell">Radio</span><span class="cell">More...</span>
      <span class="cell last"><span class="searchbox">Search<svg><use href="#search"/></svg></span></span>
    </div>
    <div class="title"><svg class="newslogo"><use href="#news"/></svg><i class="slot"></i><span class="rss">RSS<svg><use href="#rss"/></svg></span></div>
    <nav><a>Home</a><a>World</a><a>UK</a><a>England</a><a>N. Ireland</a><a>Scotland</a><a>Wales</a><a>Business</a><a class="on">Politics</a><a>Health</a><a>Education</a><a>Sci/Environment</a><a>Technology</a><a>Entertainment &amp; Arts</a></nav>
  </div>
  <h1>Syria’s refugee exodus</h1>
  <p class="date"><b>23 March 2013 Last updated at 15:43</b></p>
  <hr>
  <p class="copy">More than two million Syrians have fled into neighbouring countries since their country descended into civil war. Official figures show the<br>flow of people began in earnest in early 2012 as widespread latin goats. Lorem ipsum dolor sit amet, consectetur adipisicing elit, sed do<br>eiusmod tempor incididunt ut labore et dolore magna aliqua. Ut enim ad minim veniam, quis nostrud exercitation ullamco laboris nisi ut<br>aliquip ex ea commodo consequat. Duis aute irure dolor in reprehenderit in voluptate velit esse cillum dolore eu fugiat nulla pariatur.<br>Excepteur sint occaecat cupidatat non proident, sunt in culpa qui officia deserunt mollit anim id est laborum."<br><a class="plain">Read more</a></p>
  <hr>
  <div class="timeline">
    <a><svg><use href="#chev-l"/></svg></a>
    <svg class="tl" width="815" height="80">
      <use href="#flow" width="814.700" height="63"/>
      <text x="1" y="77">M-2011</text><text x="88" y="77">J</text><text x="245" y="77">D</text><text x="272" y="77">J-2012</text><text x="404" y="77">J</text><text x="560" y="77">D</text><text x="587" y="77">J-2013</text><text x="719" y="77">J</text><text x="797" y="77">S</text>
    </svg>
    <a><svg><use href="#chev-r"/></svg></a>
  </div>
  <section class="atlas">
    <svg class="scene" width="965" height="791">
      <use href="#syria" width="965" height="791"/>
      <circle cx="272" cy="551.800" r="6" fill="#f05350" stroke="#555"/>
      <g class="arrows"><path d="M326.500 202.700H199.100"/><path d="M299.600 254.200H171.500"/><path d="M254.900 306.800H126.100"/><path d="M320 342H161"/><path d="M249.700 364.800H121.600"/><path d="M249 389.200L159 478.600"/><path d="M308.800 419L218.800 509"/><path d="M274 551.800H161"/><path d="M195.800 607V692.100"/><path d="M230.600 627.600V756.100"/><path d="M304.200 669.900V756.100"/><path d="M400.800 610.300V696"/><path d="M501.300 300.800L341 139.300"/><path d="M448.800 211.400L538.800 120.900"/><path d="M520.400 212.500L610.400 122"/><path d="M668.900 177.800L758.900 87.300"/><path d="M688.600 355.600H816"/><path d="M627.500 441.200L718.100 531.700"/><path d="M489.500 522L580.200 611.900"/></g>
      <g class="names"><text x="379.800" y="260">ALEPPO</text><text x="513" y="260">AR-RAQQAH</text><text x="657.700" y="220.600">AL-HASAKAH</text><text x="295.700" y="284.600">IDLIB</text><text x="230" y="330.600">LATAKIA</text><text x="357.400" y="359.300">HAMA</text><text x="228" y="384.800">TARTUS</text><text x="624.200" y="390.200">DEIR EZ-ZOR</text><text x="437.600" y="459">HOMS</text><text x="321.300" y="556.600">DAMASCUS</text><text x="194.500" y="584.300">QUNEITRA</text><text x="392.900" y="585.400">RIF-DIMASHQ</text><text x="245" y="620">DARAA</text><text x="318.700" y="628.200">AS-SUWAYDA</text></g>
    </svg>
    <div class="q egypt"><h4>EGYPT</h4><strong>24550</strong><ul><li>ALEPPO <em>2030</em><li>AR-RAQQAH <em>3400</em><li>HAMA <em>5400</em><li>IDLIB <em>390</em><li>LATAKIA <em>7400</em><li>TARTUS <em>3400</em></ul></div>
    <div class="q iraq"><h4>IRAQ</h4><strong>24550</strong><ul><li>AL-HASAKAH <em>2030</em><li>AR-RAQQAH <em>2030</em><li>DEIR EZ-ZOR <em>2030</em></ul></div>
    <div class="q lebanon"><ul><li>TARTUS <em>3400</em><li>HOMS <em>3400</em><li>DAMASCUS <em>3400</em><li>RIF-DIMASHQ <em>3400</em><li>AS-SUWAYDA <em>3400</em><li>DARAA <em>3400</em><li>QUNEITRA <em>3400</em></ul><strong>24550</strong><h4>LEBANON</h4></div>
    <div class="q jordan"><ul><li>HOMS <em>2334</em><li>DEIR EZ-ZOR <em>2334</em></ul><strong>24550</strong><h4>JORDAN</h4></div>
    <label class="toggle">Turn on the ethnic map<i></i></label>
    <div class="turkey"><strong>24550</strong><h4>TURKEY</h4></div>
  </section>
  <p class="closing">Closing text: dolor sit amet, consectetur adipiscing elit. Mauris interdum, ligula vel tempus porta, nisi ligula porta quam, at luctus est purus sed dolor.</p>
  <footer class="services">
    <div class="row">
      <div class="feeds">
        <h3>Services</h3>
        <ul>
          <li><svg width="32" height="36"><use href="#rss" y="5" width="32" height="31"/></svg>News Feeds
          <li><svg width="32" height="36"><path fill="#5a5a5a" fill-rule="evenodd" d="M0 4h19V0h6v36H0zM5 9v19h15V9z"/></svg>Mobile
          <li><svg width="32" height="36"><path fill="#5a5a5a" fill-rule="evenodd" d="M0 2h25v34H0zM4 5v10h17V5z"/><circle cx="12.500" cy="24.500" r="5.500" fill="none" stroke="#fff" stroke-width="4"/></svg>Podcasts
          <li><svg width="34" height="36"><path fill="#5a5a5a" d="M17 10l17 26H0z"/><path d="M17 18v9M17 30v3.500" stroke="#fff" stroke-width="3"/></svg>Alerts
          <li><svg width="34" height="36"><path fill="#5a5a5a" d="M0 14h34v22H0z"/><path d="M1 15l16 12 16-12" fill="none" stroke="#fff" stroke-width="2"/></svg>E-mail News
        </ul>
      </div>
      <div class="aboutnews"><h3>About BBC News</h3><p>Editor's blog<br>Values of BBC Journalism<br>News Sources</p></div>
    </div>
    <div class="row low">
      <div class="feeds"><svg class="logo"><use href="#bbc"/></svg><p><b>BBC © MMX</b> The BBC is not responsible for the content of external internet sites.</p></div>
      <ul><li>BBC Help<li>Accessibility Help<li>Parental Guidance<li>Jobs</ul>
      <ul><li>About the BBC<li>Contact Us<li>Terms of Use<li>Privacy &amp; Cookies</ul>
    </div>
  </footer>
</article>

</main>
</body>
</html>
```
FILE: styles.css
```css
* { box-sizing: border-box; margin: 0; padding: 0; }
html, body { background: #fff; }
body { width: 4096px; height: 2191px; overflow: hidden; font-family: "Liberation Sans", Arial, sans-serif; color: #404040; }
ul { list-style: none; }
i { font-style: normal; }
svg { display: block; }
svg, symbol { overflow: visible; }
.defs { position: absolute; }

.board { zoom: .97269; display: flex; align-items: flex-start; padding: 113px 0 0 110px; white-space: nowrap; }
.panel { display: grid; grid-template-columns: 100%; align-items: start; flex: none; background: #fff; box-shadow: 0 0 0 1px #a2a2a2; }
.xs { width: 242px; height: 1888px; grid-template-rows: 33px 48px 40.500px 26px 26.500px 14px 302px 10px 22px 269px 144px 12px 22.500px 271.500px 125px 19.300px 28.700px 118.500px 13px 28.500px 310px; }
.sm { width: 321px; height: 1674px; margin: 1px 0 0 643px; grid-template-rows: 32.500px 57.500px 30.500px 27.500px 9px 134px 18px 56px 266px 15px 106.500px 268.500px 92px 47px 53px 14px 39px 141px 267px; }
.md { width: 481px; height: 2028px; margin: 1px 0 0 138.500px; grid-template-rows: 32px 65px 29.500px 27.500px 14px 123px 18.500px 55.500px 321px 71px 395.500px 91.500px 33.500px 73.500px 39px 58px 11.500px 37.500px 145px 386px; }
.lg { width: 769px; height: 1442px; margin-left: 187.500px; grid-template-rows: 40px 66px 13px 29.500px 40px 27.500px 23.500px 79.500px 33px 90.400px 625.600px 90px 284px; }
.xl { width: 1010px; height: 1589px; margin: -1px 0 0 187px; grid-template-rows: 159.700px 41.700px 26.600px 13px 144px 21.700px 108.900px 814.400px 100px 159px; }

/* logos */
.bg { fill: var(--tile, #222); }
.fg { fill: var(--letter, #fff); }
.bbc-t { font: 700 19px Lato, sans-serif; text-anchor: middle; }
.news-t { font: 400 33px Lato, sans-serif; fill: #fff; }
.logo { width: 73px; height: 21px; flex: none; }
.newslogo { width: 92px; height: 24px; flex: none; }

/* header strip */
.bar { display: flex; align-items: center; height: 33px; padding-left: 9px; font: bold 13px/16px "Liberation Sans", sans-serif; color: #222; }
.cell { display: flex; align-items: center; align-self: stretch; border-left: 1px solid #aaa; }
.bar .cell svg { width: 18px; height: 18px; }
.caret { border: 3.500px solid transparent; border-top: 4px solid #222; border-bottom: 0; }
.xs .bar .logo, .sm .bar .logo { margin-right: 8.500px; }
.xs .user { width: 31px; padding-left: 6px; }
.xs .menu { width: 81px; padding: 0 6px; justify-content: space-between; }
.xs .find { width: 30px; padding-left: 6px; }
.sm .bar { height: 32.500px; }
.sm .user { width: 35px; padding-left: 8px; }
.sm .menu { width: 157px; padding: 0 7px 0 8px; justify-content: space-between; }
.sm .find { width: 30px; padding-left: 6px; }
.md .bar { height: 32px; padding-left: 15.500px; }
.md .bar .logo { margin-right: 8.500px; }
.md .user { width: 35px; padding-left: 8px; }
.md .item { width: 51px; padding-left: 8px; }
.md .menu { width: 196px; padding: 0 8px; justify-content: space-between; }
.md .find { width: 34px; padding-left: 7px; }
.lg .bar { height: 40px; padding-left: 17px; }
.lg .bar .logo { width: 84px; height: 24px; margin-right: 8.500px; }
.lg .user { width: 51px; padding-left: 16px; }
.lg .item { width: 67px; padding-left: 16px; }
.lg .item:nth-child(5) { width: 85px; }
.lg .item:nth-child(6) { width: 76px; }
.lg .item:nth-child(7) { width: 89px; }
.lg .caret { margin-left: 19px; }
.box { padding-left: 7px; }
.searchbox { display: flex; align-items: center; justify-content: space-between; width: 200px; height: 24px; padding: 0 8px; background: #c9c9c9; color: #333; }

.mast { display: flex; align-items: center; justify-content: space-between; height: 48.500px; padding-left: 9px; background: #b51718; color: #fff; }
.xs .mast { height: 48px; margin-right: -1px; }
.sections { display: flex; align-items: center; gap: 4px; width: 100px; height: 32px; margin-right: 8px; padding-left: 9px; background: #821917; border-radius: 2px; font: bold 15.700px/20px "Liberation Sans", sans-serif; }
.sections svg { width: 13px; height: 12px; }
.md .mast { padding-left: 15.500px; }
.md .sections { margin-right: 16px; }
.lg .mast { height: 63px; padding-left: 18px; }
.lg .newslogo { width: 125px; height: 31px; }
.lg .sections { width: 126px; height: 48px; margin-right: 15px; padding-left: 17px; gap: 6px; background: #841113; border-radius: 0; font-size: 17.800px; }
.lg .sections svg { width: 15px; height: 14px; }
.sectionbar { height: 32px; padding-left: 8.500px; background: #7f1a14; color: #fff; font: bold 12.500px/32px "Liberation Sans", sans-serif; }

/* article text */
h1 { padding-left: 9px; font: bold 22px/26px "Liberation Sans", sans-serif; color: #444; }
.xs h1 { font-size: 18px; line-height: 22px; }
.md h1 { padding-left: 17.500px; }
.lg h1, .xl h1 { padding-left: 17px; font-size: 28.900px; line-height: 34px; color: #5e5e5e; }
.xl h1 { padding-left: 21.500px; }
.date { padding-left: 9px; font-size: 13px; line-height: 16px; color: #7c9f26; }
.md .date, .lg .date { padding-left: 17px; }
.xl .date { padding-left: 21px; }
hr { height: 1px; border: 0; margin: 0 11px 0 9.500px; background: #c8c8c8; }
hr.mid { background: #8c8c8c; margin-right: 9px; }
hr.wide { margin: 0 11px 0 7px; }
.md hr { margin: 0 16px 0 17px; }
.lg hr { margin: 0 16px 0 17px; }
.xl hr { margin: 0 22px 0 21px; height: 1.500px; }
.copy { padding-left: 9px; font-size: 16px; line-height: 20px; color: #404040; }
.xs .copy { font-size: 12px; line-height: 14.500px; }
.sm .in { padding-left: 11.700px; }
.md .copy { padding-left: 16.300px; }
.md .copy.in { padding-left: 17.500px; }
.lg .copy { padding-left: 16px; }
.xl .copy { padding-left: 19.300px; }
.more { font-weight: bold; font-style: italic; color: #7fa93c; }
.plain { color: #86a928; }
.closing { font-size: 13px; line-height: 16.300px; padding-left: 17px; }
.xl .closing { padding-left: 21px; }
.olddate { padding-left: 17px; font: 12.200px/16px Lato, sans-serif; color: #666; }
.quote { padding-left: 49px; font: bold 13px/14px Lato, sans-serif; color: #444; }
.place { padding-left: 14px; font-size: 16px; line-height: 20px; color: #4d4d4d; }
.place small, .select small { font-size: 12.200px; font-weight: normal; }
.sharepage { padding-left: 11.500px; font-size: 16px; line-height: 20px; color: #444; }
.about { padding-left: 11px; font-size: 13px; line-height: 16px; color: #222; }
.story { padding-left: 9px; font-size: 20px; line-height: 24px; color: #555; }
.md .story { padding-left: 17.500px; font-size: 25px; line-height: 30px; transform: scaleX(1.150); transform-origin: 17.500px 0; }
.sechead { padding-left: 9px; font-size: 24px; line-height: 30px; color: #111; }
.index { margin: 0 9px; border-top: 1.500px solid #444; font-size: 18px; line-height: 46px; color: #222; }
.index li { height: 46.500px; }
.index li + li { border-top: 1.500px solid #444; }
.md .sechead { padding-left: 17px; }
.md .index { margin: 0 16px 0 17px; }

.select { display: flex; align-items: center; gap: 4px; height: 52.500px; margin: 0 12px 0 11px; padding: 0 13px 0 9.500px; border: 2px solid #747474; color: #4d4d4d; font-size: 16px; }
.select i { margin-left: auto; border: 7.500px solid transparent; border-top-color: #4d4d4d; border-bottom: 0; }
.md .select { margin: 0 15.500px 0 18px; padding-right: 18px; }

/* charts */
.grid { fill: none; stroke: #c8c8c8; stroke-width: 1px; vector-effect: non-scaling-stroke; }
.grid.dark { stroke: #aaa; }
.ev { fill: none; stroke: #f5d3b2; stroke-width: 1px; vector-effect: non-scaling-stroke; }
.ln { fill: none; stroke-width: 1.400px; vector-effect: non-scaling-stroke; stroke-linejoin: round; }
.chart text { font-size: 13px; fill: #4d4d4d; }
.chart .y text { font-size: 12px; fill: #f5a81c; text-anchor: end; }
.grey .y text { fill: #4d4d4d; }
.chart .x text { font-size: 11.500px; text-anchor: middle; }
.big .y text { font-size: 14.400px; }
.big .x text { font-size: 13.500px; }
.big .key text { font-size: 15.700px; }
.b, .eg, .iq, .jo, .le { font-weight: bold; }
.chart .eg { fill: #f5ab18; }
.chart .iq { fill: #4f86ae; }
.chart .jo { fill: #7f5a8b; }
.chart .le { fill: #c96264; }

.sm .map { width: 266px; height: 240.500px; margin-left: 30px; }
.md .map { width: 398px; height: 361px; margin-left: 46px; }
#land, #borders { vector-effect: non-scaling-stroke; }
.ink use { fill: none; stroke: #4a4a4a; stroke-width: .9px; }

/* share buttons */
.share { display: flex; color: #fff; font-weight: bold; font-size: 16px; }
.share a { display: flex; align-items: center; justify-content: center; gap: 4px; flex: 1; }
.share svg { flex: none; }
.em { background: #62605d; }
.em svg { width: 21px; height: 14px; }
.fb { background: #3c5a85; font: 900 17.500px/20px Lato, sans-serif; }
.tw { background: #4bc1ef; }
.tw text { font: 900 21px Lato, sans-serif; fill: #fff; stroke: #fff; stroke-width: .6px; stroke-linejoin: round; }
.xs .share { flex-direction: column; gap: 7.300px; height: 111px; margin: 0 7px 0 11px; }
.sm .share { gap: 7.500px; height: 43px; margin: 0 8px 0 9px; }
.md .share { gap: 9px; height: 42px; margin: 0 17px 0 16px; }
.sm .fb, .md .fb { background: #3e5384; }
.sm .tw { background: #2ab8ee; }
.md .tw { background: #2b9fd6; }
.thick { height: 4px; margin: 0 7px 0 11px; background: #ccc; }
p.top { display: flex; align-items: center; gap: 6px; padding-left: 11px; font-size: 13.200px; line-height: 16px; color: #222; -webkit-text-stroke: .3px #222; }

/* dark footers */
.dark { background: #333; color: #fff; }
.dark .links { display: grid; grid-auto-flow: column; justify-content: start; }
.xs .dark { height: 310px; margin: 0 -1px 0 2.500px; padding: 3px 7px 0 9px; }
.xs h3 { font-size: 16px; line-height: 20px; margin-bottom: 5.500px; }
.xs .links { font-size: 12px; grid-template-columns: 104.500px 119px; line-height: 21.700px; margin-bottom: 10px; }
.xs .links ul + ul { border-left: 1px solid #777; padding-left: 18.500px; }
.xs .legal { border-top: 1.500px solid #777; padding-top: 16.500px; margin: 0; }
.xs .legal ul + ul { border: 0; padding-left: 19.500px; }
.sm .dark { height: 267px; padding: 19.500px 0 0 15px; }
.sm h3 { font-size: 14px; line-height: 18px; margin-bottom: 11px; }
.sm .links { height: 200px; font-size: 14px; line-height: 44.200px; grid-template-columns: 97px 104.500px 104px; }
.sm .links li:first-child, .md .links li:first-child { margin-top: -9px; }
.sm .links ul + ul, .md .links ul + ul { border-left: 1px solid #777; padding-left: 7px; }
.md .dark { height: 386px; padding: 17px 0 0 9px; }
.md h3 { font-size: 24px; line-height: 30px; margin-bottom: 12px; }
.md .links { height: 198px; font-size: 16px; line-height: 44px; grid-template-columns: 147px 160px 140px; }
.md .links ul + ul { padding-left: 14px; }
.md .links.legal { height: 90px; margin: 20px 31px 0 0; padding-top: 17.500px; border-top: 1px solid #888; font-size: 13px; }
.md .legal ul + ul { border: 0; padding-left: 15px; }

/* timeline */
.timeline { display: flex; align-items: flex-start; justify-content: space-between; padding: 0 17px; }
.timeline a { width: 48.400px; height: 48.200px; background: #dedede; }
.timeline a svg { width: 48.400px; height: 48.200px; }
.timeline text { font-size: 12.200px; fill: #555; }
.xl .timeline { padding: 0 23px 0 21px; }
.xl .timeline a, .xl .timeline a svg { width: 63px; height: 63px; }
.curve { fill: none; stroke: #c9c9c9; stroke-width: 3px; vector-effect: non-scaling-stroke; }
.tick { fill: none; stroke: #777; stroke-width: 1px; vector-effect: non-scaling-stroke; }
.mark { fill: none; stroke: #d87a22; stroke-width: 1.100px; vector-effect: non-scaling-stroke; }

/* refugee map */
.atlas { --edge: #cbcbcb; display: grid; grid-template-columns: 1fr 1fr; position: relative; border: 1px solid var(--edge); margin-left: 17.200px; width: 735.500px; height: 603px; grid-template-rows: 304px 1fr; }
.xl .atlas { margin-left: 21.200px; width: 965px; height: 791px; grid-template-rows: 399px 1fr; }
.scene { position: absolute; z-index: 1; left: 0; top: 0; }
.edge { fill: none; stroke: #fff; stroke-width: 1.200px; }
.arrows path { fill: none; stroke: #4c5983; stroke-width: 4px; marker-end: url(#tip); }
.names text { font: bold 12px "Liberation Sans", sans-serif; fill: #4f4f4f; text-anchor: middle; }
.xl .names text { font-size: 12.800px; }
.q { --w: 10.600px; --h: 31.500px; padding: 6px 19.500px 0 17px; background: linear-gradient(var(--c), var(--c)) no-repeat; background-size: var(--w) var(--h); font-weight: bold; color: #4f4f4f; font-size: 12.700px; line-height: 15.600px; }
.q h4, .turkey h4 { font-size: 16.500px; line-height: 20px; }
.q strong, .turkey strong { display: block; font-size: 22.600px; line-height: 25px; }
.q em, .q strong { font-style: normal; color: var(--c); }
.q ul { margin-top: 3px; }
.egypt { --c: #f3af2b; border-right: 1px solid var(--edge); border-bottom: 1px solid var(--edge); }
.iraq { --c: #769fbe; text-align: right; border-bottom: 1px solid var(--edge); background-position: 100% 0; padding-right: 20px; }
.lebanon { --c: #b49ab8; border-right: 1px solid var(--edge); display: flex; flex-direction: column; justify-content: flex-end; background-position: 0 100%; }
.jordan { --c: #d89291; text-align: right; display: flex; flex-direction: column; justify-content: flex-end; background-position: 100% 100%; padding-right: 20px; }
.iraq ul { margin-right: -2px; line-height: 16px; }
.jordan ul { margin: 0 -2px 2px 0; }
.lg .lebanon ul { margin-bottom: 2px; }
.lg .lebanon, .lg .jordan { padding-bottom: 1.500px; }
.toggle { position: absolute; z-index: 2; left: 264px; top: -1px; width: 206px; height: 50px; display: flex; align-items: center; justify-content: center; gap: 13px; border: 1px solid #bdbdbd; background: #fff; font-size: 12.900px; color: #444; }
.toggle i { width: 19px; height: 19px; border: 1.500px solid #8a8a8a; }
.turkey { position: absolute; z-index: 2; left: 312.500px; bottom: -1px; width: 108px; height: 54px; padding-top: 4.500px; border: 1px solid #c4c4c4; background: #fff; text-align: center; font-weight: bold; color: #4f4f4f; }
.turkey strong { color: #b3b3b3; }
.turkey h4 { line-height: 18px; }
.xl .q { --w: 13.800px; --h: 42px; padding: 7px 23px 4px 22px; font-size: 13.200px; line-height: 15.200px; }
.xl .q h4, .xl .turkey h4 { font-size: 23px; line-height: 26px; }
.xl .q strong, .xl .turkey strong { font-size: 31.300px; line-height: 32px; }
.xl .q ul { margin-top: 8px; }
.xl .iraq ul { line-height: 14.800px; margin-right: 0; }
.xl .lebanon ul { line-height: 16.200px; margin-bottom: 4px; }
.xl .jordan ul { margin: 0; }
.xl .toggle { left: 378px; width: 207px; }
.xl .turkey { left: 421px; width: 121px; height: 73px; padding-top: 4px; }
.xl .turkey h4 { line-height: 26px; }
.xl .turkey strong { line-height: 34px; }

/* light footers: set wide, drawn at 70% height */
.light, .services { transform: scaleY(.7); transform-origin: 0 0; color: #222; font-size: 13px; }
.light { padding-left: 17px; }
.light .logo { margin-bottom: 14.500px; }
.cols { display: grid; grid-template-columns: 168.500px 190px 190px 170px; font-weight: bold; line-height: 37.100px; height: 178px; }
.cols ul + ul { border-left: 1px solid #c4c4c4; padding-left: 15px; }
.cols li:first-child { margin-top: -4px; }
.cols.legal { font-weight: normal; line-height: 30px; height: 109px; margin: 16px 16px 0 0; padding-top: 12px; border-top: 2px solid #bbb; }
.cols.legal ul + ul { border: 0; padding-left: 16px; }
.light p { font-size: 12.950px; line-height: 16px; }

.services { padding: 0 19px 0 15.800px; }
.row { display: flex; align-items: flex-start; height: 107px; }
.feeds { width: 640.500px; }
.services h3 { font-size: 23px; line-height: 28px; margin-top: 3px; color: #4d4d4d; }
.feeds ul { display: flex; margin-top: 10px; color: #1d6a85; font-weight: bold; line-height: 16px; }
.feeds li { width: 127.800px; }
.feeds li svg { margin-bottom: 1px; }
.aboutnews p { margin-top: 4px; color: #1d6a85; font-weight: bold; line-height: 15px; font-size: 12.800px; }
.low { border-top: 2.500px solid #444; padding-top: 12px; color: #555; line-height: 15px; font-size: 12.500px; }
.low .logo { --tile: #555; width: 85px; height: 23px; margin-bottom: 31px; }
.low ul { width: 159.500px; margin-top: -3px; }

/* desktop masthead */
.hero { position: relative; height: 130px; background: linear-gradient(#a31917 106px, #fff 106px); border-top: 2px solid #b5b5b5; color: #fff; }
.art { position: absolute; left: 590px; top: -2px; overflow: hidden; }
.hero .top { position: relative; display: flex; align-items: center; height: 40px; padding-left: 27.800px; background: rgba(103, 25, 18, .62); border-bottom: 1px solid rgba(80, 20, 15, .5); font: bold 12.800px/16px "Liberation Sans", sans-serif; }
.hero .logo { --tile: #fff; --letter: #8a1816; width: 84px; height: 23.500px; margin-right: 8.500px; }
.hero .cell { border-left: 1px solid rgba(160, 30, 25, .4); padding-left: 15px; width: 66px; }
.hero .sign { width: 164.500px; gap: 8px; }
.hero .sign svg { width: 14.500px; height: 14.500px; }
.hero .cell:nth-child(5) { width: 82px; }
.hero .cell:nth-child(6) { width: 76px; }
.hero .cell:nth-child(7) { width: 48px; }
.hero .cell:nth-child(8) { width: 68.500px; }
.hero .cell:nth-child(9) { width: 76px; }
.hero .last { padding-left: 8px; width: 230px; }
.hero .searchbox { width: 212px; height: 23px; background: #fff; }
.hero .searchbox svg { width: 15px; height: 15px; }
.title { position: relative; display: flex; align-items: flex-start; height: 64px; padding-left: 29px; }
.hero .newslogo { width: 126px; height: 32px; margin-top: 15px; }
.slot { width: 148px; height: 36px; margin: 19px 0 0 11px; background: #8a1816; }
.rss { display: flex; align-items: center; gap: 5px; margin: 36px 21px 0 auto; font: bold 12.800px/14px "Liberation Sans", sans-serif; }
.rss svg { width: 13px; height: 13px; }
nav { position: relative; display: flex; width: 976px; height: 24px; margin-left: 20px; background: #3d0e10; font: bold 12px/23px "Liberation Sans", sans-serif; }
nav a { padding: 0 6px; background: linear-gradient(#6a3335, #6a3335) no-repeat 0 50% / 1px 10px; }
nav a:first-child { background: none; }
nav .on { background: #ededed; color: #555; }
```
